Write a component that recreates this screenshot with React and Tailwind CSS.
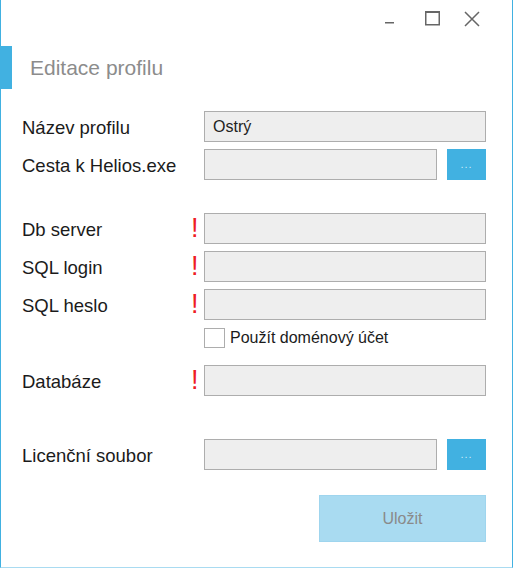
export default function App() {
  const font = { fontFamily: '"Liberation Sans", Arial, sans-serif' };
  const Input = ({ children }) => (
    <div className="flex-1 h-[31px] bg-[#eeeeee] border border-[#adadad] flex items-center px-[8px] text-[16px] text-[#222]">
      {children}
    </div>
  );
  const Bang = ({ show }) => (
    <div className="w-[14px] flex items-center justify-start h-full">
      {show && <span className="text-[27px] leading-none text-[#ee1c25] ml-[1px] -mt-[1px]">!</span>}
    </div>
  );
  const Dots = () => (
    <div className="w-[39px] h-[31px] ml-[10px] bg-[#41b1e1] flex items-center justify-center">
      <span className="text-[11px] tracking-[1px] text-[#cdeaf7] leading-none">...</span>
    </div>
  );
  const Row = ({ label, bang, children, className = "" }) => (
    <div className={"flex items-center h-[31px] " + className}>
      <div className="w-[168px] pt-[3px] text-[18.5px] text-[#1b1b1b] leading-none">{label}</div>
      <Bang show={bang} />
      <div className="flex-1 flex items-center">{children}</div>
    </div>
  );
  return (
    <div className="w-[513px] h-[568px] bg-white border-l border-r border-b border-l-[#41b1e1] border-r-[#41b1e1] border-b-[#a9dbf1] flex flex-col" style={font}>
      <div className="h-[46px] flex justify-end items-start pt-[11px] pr-[31px]">
        <svg width="40" height="16" viewBox="0 0 40 16">
          <rect x="2" y="11" width="9" height="1.5" fill="#666" />
        </svg>
        <svg width="40" height="16" viewBox="0 0 40 16">
          <rect x="2.75" y="0.75" width="13.5" height="13" fill="none" stroke="#666" strokeWidth="1.5" />
          <rect x="2" y="0" width="15" height="2" fill="#666" />
        </svg>
        <svg width="18" height="16" viewBox="0 0 18 16">
          <path d="M2 1 L16 15 M16 1 L2 15" stroke="#666" strokeWidth="1.5" fill="none" />
        </svg>
      </div>
      <div className="h-[43px] flex items-center">
        <div className="w-[11px] h-full bg-[#41b1e1]" />
        <div className="ml-[18px] text-[21px] text-[#8c8c8c] leading-none">Editace profilu</div>
      </div>
      <div className="pl-[21px] pr-[26px] flex flex-col">
        <Row label="Název profilu" className="mt-[22px]">
          <Input>Ostrý</Input>
        </Row>
        <Row label="Cesta k Helios.exe" className="mt-[7px]">
          <Input />
          <Dots />
        </Row>
        <Row label="Db server" bang className="mt-[33px]">
          <Input />
        </Row>
        <Row label="SQL login" bang className="mt-[7px]">
          <Input />
        </Row>
        <Row label="SQL heslo" bang className="mt-[7px]">
          <Input />
        </Row>
        <div className="flex items-center mt-[8px] h-[20px] pl-[182px]">
          <div className="w-[21px] h-[20px] border border-[#adadad] bg-white" />
          <span className="ml-[5px] text-[16px] text-[#1b1b1b] leading-none">Použít doménový účet</span>
        </div>
        <Row label="Databáze" bang className="mt-[17px]">
          <Input />
        </Row>
        <Row label="Licenční soubor" className="mt-[43px]">
          <Input />
          <Dots />
        </Row>
        <div className="flex justify-end mt-[25px]">
          <div className="w-[167px] h-[47px] bg-[#a9dbf1] border border-[#9fd5ee] flex items-center justify-center text-[16px] text-[#8a8a8a]">
            Uložit
          </div>
        </div>
      </div>
    </div>
  );
}
